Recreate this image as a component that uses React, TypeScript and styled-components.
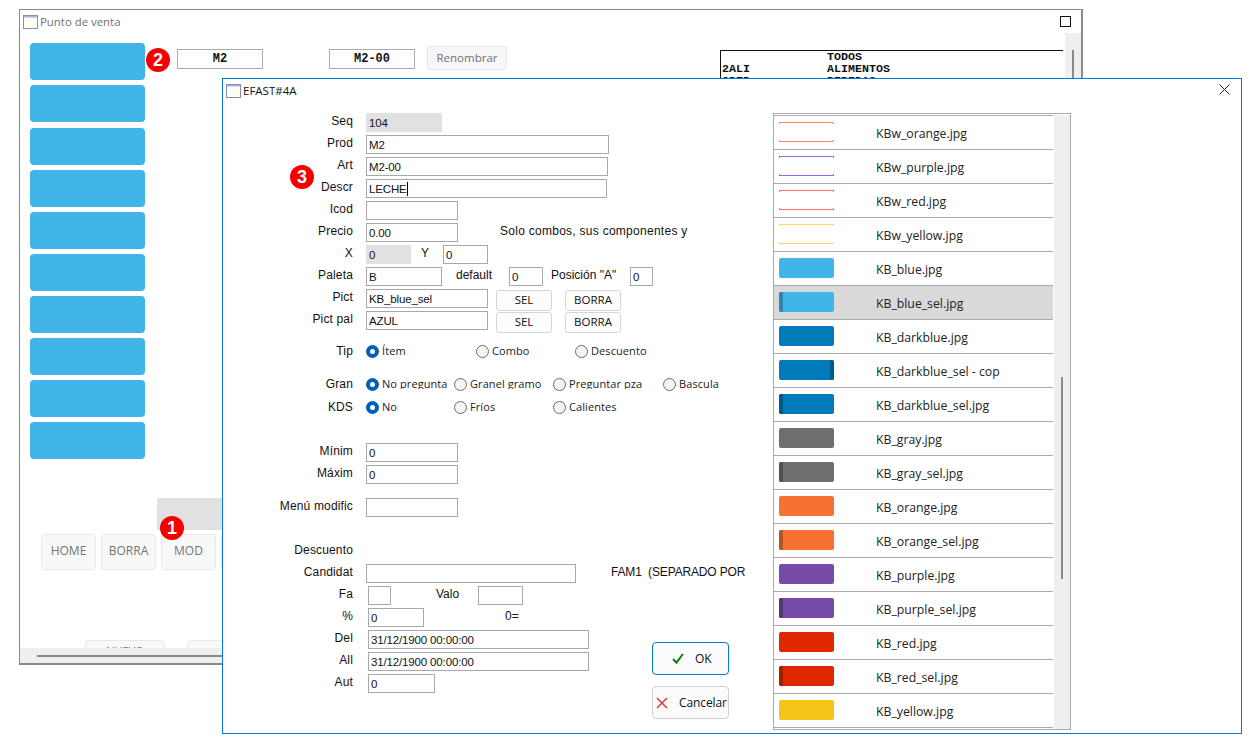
import styled, { createGlobalStyle } from 'styled-components';

const GlobalStyle = createGlobalStyle`
    html, body {
        margin: 0;
        padding: 0;
        background: #ffffff;
    }
    body {
        width: 1253px;
        height: 744px;
        overflow: hidden;
        font-family: "Liberation Sans", Arial, sans-serif;
        font-size: 12px;
        color: #111111;
    }
`;

const SIDE_BUTTONS = 10;

const FILES: { name: string; color: string; mark?: string; side?: 'left' | 'right'; outline?: boolean; active?: boolean }[] = [
    { name: 'KBw_orange.jpg', color: '#ff8a5c', outline: true },
    { name: 'KBw_purple.jpg', color: '#9a66ee', outline: true },
    { name: 'KBw_red.jpg', color: '#ff6d60', outline: true },
    { name: 'KBw_yellow.jpg', color: '#fbd768', outline: true },
    { name: 'KB_blue.jpg', color: '#41b5e8' },
    { name: 'KB_blue_sel.jpg', color: '#41b5e8', mark: '#2f86ac', side: 'left', active: true },
    { name: 'KB_darkblue.jpg', color: '#007ab8' },
    { name: 'KB_darkblue_sel - copia.jpg', color: '#007ab8', mark: '#005a88', side: 'right' },
    { name: 'KB_darkblue_sel.jpg', color: '#007ab8', mark: '#005a88', side: 'left' },
    { name: 'KB_gray.jpg', color: '#6e6e6e' },
    { name: 'KB_gray_sel.jpg', color: '#6e6e6e', mark: '#505050', side: 'left' },
    { name: 'KB_orange.jpg', color: '#f57232' },
    { name: 'KB_orange_sel.jpg', color: '#f57232', mark: '#b45424', side: 'left' },
    { name: 'KB_purple.jpg', color: '#744ca8' },
    { name: 'KB_purple_sel.jpg', color: '#744ca8', mark: '#56387c', side: 'left' },
    { name: 'KB_red.jpg', color: '#de2800' },
    { name: 'KB_red_sel.jpg', color: '#de2800', mark: '#a41e00', side: 'left' },
    { name: 'KB_yellow.jpg', color: '#f4c418' },
];

const WindowIcon = () => (
    <svg width="15" height="14" viewBox="0 0 15 14">
        <rect x="0.5" y="0.5" width="14" height="13" fill="#fdfdf6" stroke="#8490b8" />
        <rect x="1" y="1" width="13" height="1.5" fill="#a9b6dc" />
    </svg>
);

const App = () => {
    return (
        <>
            <GlobalStyle />
            <BackWindow>
                <TitleBar>
                    <WindowIcon />
                    <BackTitle>Punto de venta</BackTitle>
                    <MaxBox />
                </TitleBar>
                <BackBody>
                    <SideColumn>
                        {Array.from({ length: SIDE_BUTTONS }).map((_, i) => (
                            <SideButton key={i} />
                        ))}
                    </SideColumn>
                    <BackMain>
                        <TopRow>
                            <Badge>2</Badge>
                            <CodeBox>M2</CodeBox>
                            <CodeBox $left={66}>M2-00</CodeBox>
                            <RenameButton>Renombrar</RenameButton>
                            <FamilyList>
                                <FamilyRow><span></span><span>TODOS</span></FamilyRow>
                                <FamilyRow><span>2ALI</span><span>ALIMENTOS</span></FamilyRow>
                                <FamilyRow><span>3BEB</span><span>BEBIDAS</span></FamilyRow>
                            </FamilyList>
                        </TopRow>
                    </BackMain>
                    <VScroll><VThumb /></VScroll>
                </BackBody>
                <GrayBand />
                <ActionRow>
                    <ActionBadge>1</ActionBadge>
                    <ActionButton>HOME</ActionButton>
                    <ActionButton>BORRA</ActionButton>
                    <ActionButton>MOD</ActionButton>
                    <ActionButton />
                </ActionRow>
                <FooterRow>
                    <FooterButton>NUEVO</FooterButton>
                    <FooterButton />
                </FooterRow>
                <HScroll><HThumb /></HScroll>
            </BackWindow>

            <Dialog>
                <DialogTitle>
                    <WindowIcon />
                    <DialogName>EFAST#4A</DialogName>
                    <CloseIcon width="11" height="11" viewBox="0 0 11 11">
                        <path d="M0.5 0.5 L10.5 10.5 M10.5 0.5 L0.5 10.5" stroke="#222222" strokeWidth="1" fill="none" />
                    </CloseIcon>
                </DialogTitle>
                <DialogBody>
                    <FormColumn>
                        <Row>
                            <Label>Seq</Label>
                            <Field $w={76} $readonly>104</Field>
                        </Row>
                        <Row>
                            <Label>Prod</Label>
                            <Field $w={243}>M2</Field>
                        </Row>
                        <Row>
                            <Label>Art</Label>
                            <Field $w={242}>M2-00</Field>
                        </Row>
                        <Row>
                            <Label>Descr<InlineBadge>3</InlineBadge></Label>
                            <Field $w={241}>LECHE<Caret /></Field>
                        </Row>
                        <Row>
                            <Label>Icod</Label>
                            <Field $w={92} />
                        </Row>
                        <Row>
                            <Label>Precio</Label>
                            <Field $w={92}>0.00</Field>
                            <Note $left={42} $w={188} $spread={0.27} $clip>Solo combos, sus componentes y</Note>
                        </Row>
                        <Row>
                            <Label>X</Label>
                            <Field $w={45} $readonly>0</Field>
                            <Note $left={10} $w={22}>Y</Note>
                            <Field $w={45}>0</Field>
                        </Row>
                        <Row>
                            <Label>Paleta</Label>
                            <Field $w={76}>B</Field>
                            <Note $left={14} $w={53}>default</Note>
                            <Field $w={34}>0</Field>
                            <Note $left={8} $w={79}>Posición "A"</Note>
                            <Field $w={23}>0</Field>
                        </Row>
                        <Row>
                            <Label>Pict</Label>
                            <Field $w={122}>KB_blue_sel</Field>
                            <SmallButton $left={8}>SEL</SmallButton>
                            <SmallButton $left={13}>BORRA</SmallButton>
                        </Row>
                        <Row>
                            <Label>Pict pal</Label>
                            <Field $w={122}>AZUL</Field>
                            <SmallButton $left={8}>SEL</SmallButton>
                            <SmallButton $left={13}>BORRA</SmallButton>
                        </Row>

                        <RadioRow $top={8}>
                            <Label>Tip</Label>
                            <RadioCell $w={110}><Radio $on /><RadioText>Ítem</RadioText></RadioCell>
                            <RadioCell $w={99}><Radio /><RadioText>Combo</RadioText></RadioCell>
                            <RadioCell $w={110}><Radio /><RadioText>Descuento</RadioText></RadioCell>
                        </RadioRow>
                        <RadioRow $top={10}>
                            <Label>Gran</Label>
                            <RadioCell $w={88}><Radio $on /><RadioText $cut>No pregunta</RadioText></RadioCell>
                            <RadioCell $w={99}><Radio /><RadioText $cut>Granel gramo</RadioText></RadioCell>
                            <RadioCell $w={110}><Radio /><RadioText $cut>Preguntar pza</RadioText></RadioCell>
                            <RadioCell $w={70}><Radio /><RadioText>Bascula</RadioText></RadioCell>
                        </RadioRow>
                        <RadioRow $top={0}>
                            <Label>KDS</Label>
                            <RadioCell $w={88}><Radio $on /><RadioText>No</RadioText></RadioCell>
                            <RadioCell $w={99}><Radio /><RadioText>Fríos</RadioText></RadioCell>
                            <RadioCell $w={110}><Radio /><RadioText>Calientes</RadioText></RadioCell>
                        </RadioRow>

                        <Row $top={23}>
                            <Label>Mínim</Label>
                            <Field $w={92}>0</Field>
                        </Row>
                        <Row>
                            <Label>Máxim</Label>
                            <Field $w={92}>0</Field>
                        </Row>
                        <Row $top={11}>
                            <Label>Menú modific</Label>
                            <Field $w={92} />
                        </Row>

                        <Row $top={22}>
                            <Label>Descuento</Label>
                        </Row>
                        <Row>
                            <Label>Candidat</Label>
                            <Field $w={210} />
                            <Note $left={35} $w={140} $spread={-0.15}>FAM1 &nbsp;(SEPARADO POR</Note>
                        </Row>
                        <Row>
                            <Label>Fa</Label>
                            <Field $w={23} $left={2} />
                            <Note $left={45} $w={42}>Valo</Note>
                            <Field $w={45} />
                        </Row>
                        <Row>
                            <Label>%</Label>
                            <Field $w={56} $left={2}>0</Field>
                            <Note $left={81}>0=</Note>
                        </Row>
                        <Row>
                            <Label>Del</Label>
                            <Field $w={221} $left={2}>31/12/1900 00:00:00</Field>
                        </Row>
                        <Row>
                            <Label>All</Label>
                            <Field $w={221} $left={2}>31/12/1900 00:00:00</Field>
                        </Row>
                        <Row>
                            <Label>Aut</Label>
                            <Field $w={67} $left={2}>0</Field>
                        </Row>
                        <DialogActions>
                            <ConfirmButton $primary>
                                <svg width="12" height="11" viewBox="0 0 12 11">
                                    <path d="M1 6 L4.4 9.6 L11 1" stroke="#0b7a0b" strokeWidth="2" fill="none" />
                                </svg>
                                OK
                            </ConfirmButton>
                            <ConfirmButton>
                                <svg width="12" height="12" viewBox="0 0 12 12">
                                    <path d="M1 1 L11 11 M11 1 L1 11" stroke="#d23c3c" strokeWidth="1.5" fill="none" />
                                </svg>
                                Cancelar
                            </ConfirmButton>
                        </DialogActions>
                    </FormColumn>

                    <FileFrame>
                        <FileList>
                            {FILES.map((file) => (
                                <FileRow key={file.name} $active={file.active}>
                                    <Swatch $color={file.color} $outline={file.outline}>
                                        {file.mark && <SwatchMark $color={file.mark} $side={file.side} />}
                                    </Swatch>
                                    <FileName>{file.name}</FileName>
                                </FileRow>
                            ))}
                        </FileList>
                        <ListScroll><ListThumb /></ListScroll>
                    </FileFrame>
                </DialogBody>
            </Dialog>
        </>
    );
};

export default App;

const BackWindow = styled.div`
    position: absolute;
    left: 19px;
    top: 9px;
    width: 1064px;
    height: 656px;
    box-sizing: border-box;
    border: 1px solid #8a8a8a;
    border-right-width: 2px;
    border-bottom-width: 2px;
    background: #ffffff;
    display: flex;
    flex-direction: column;
`;

const TitleBar = styled.div`
    height: 23px;
    padding: 5px 10px 0 3px;
    box-sizing: border-box;
    display: flex;
    align-items: flex-start;
    gap: 2px;
`;

const BackTitle = styled.span`
    color: #707070;
    font-family: "Open Sans", sans-serif;
    font-size: 11.4px;
    line-height: 14px;
    flex: 1;
`;

const MaxBox = styled.span`
    width: 9px;
    height: 9px;
    border: 1px solid #111111;
    margin: 1px 0 0;
`;

const BackBody = styled.div`
    display: flex;
    height: 442px;
    padding-left: 10px;
`;

const SideColumn = styled.div`
    width: 115px;
    padding-top: 10px;
    display: flex;
    flex-direction: column;
    gap: 5px;
`;

const SideButton = styled.div`
    height: 37px;
    flex: none;
    border-radius: 4px;
    background: #41b5e8;

    &:nth-child(3) {
        margin-top: 1px;
    }
`;

const BackMain = styled.div`
    flex: 1;
    min-width: 0;
`;

const TopRow = styled.div`
    display: flex;
    align-items: flex-start;
    padding-top: 13px;
`;

const Badge = styled.span`
    width: 24px;
    height: 24px;
    flex: none;
    margin: 2px 0 0 1px;
    border-radius: 50%;
    background: #f40000;
    color: #ffffff;
    font-family: "Liberation Sans Narrow", "Liberation Sans", sans-serif;
    font-weight: 700;
    font-size: 18px;
    line-height: 24px;
    letter-spacing: 0;
    text-align: center;
`;

const CodeBox = styled.div<{ $left?: number }>`
    width: 86px;
    height: 20px;
    margin: 3px 0 0 ${(props) => props.$left ?? 7}px;
    box-sizing: border-box;
    border: 1px solid #aaaaaa;
    text-align: center;
    font-family: "Liberation Mono", monospace;
    font-weight: 700;
    font-size: 12px;
    line-height: 18px;
    color: #111111;
`;

const RenameButton = styled.div`
    width: 80px;
    height: 24px;
    margin-left: 12px;
    box-sizing: border-box;
    border: 1px solid #e6e6e6;
    border-radius: 3px;
    background: #f7f7f7;
    color: #707070;
    font-family: "Open Sans", sans-serif;
    font-size: 11.5px;
    line-height: 22px;
    text-align: center;
`;

const FamilyList = styled.div`
    width: 343px;
    height: 40px;
    margin: 4px 0 0 213px;
    box-sizing: border-box;
    border-top: 1px solid #111111;
    border-left: 1px solid #111111;
    padding: 0 0 0 1px;
    overflow: hidden;
`;

const FamilyRow = styled.div`
    height: 12px;
    display: grid;
    grid-template-columns: 105px 1fr;
    font-family: "Liberation Mono", monospace;
    font-weight: 700;
    font-size: 11.67px;
    line-height: 12px;
    color: #111111;
`;

const VScroll = styled.div`
    width: 16px;
    height: 100%;
    flex: none;
    background: #efefef;
    display: flex;
    justify-content: center;
    padding-top: 17px;
    box-sizing: border-box;
`;

const VThumb = styled.div`
    width: 2px;
    height: 200px;
    background: #8a8a8a;
`;

const GrayBand = styled.div`
    width: 66px;
    height: 32px;
    margin: 23px 0 0 137px;
    background: #e1e1e1;
`;

const ActionRow = styled.div`
    position: relative;
    display: flex;
    gap: 5px;
    padding: 4px 0 0 21px;
`;

const ActionBadge = styled(Badge)`
    position: absolute;
    left: 140px;
    top: -14px;
    margin: 0;
`;

const ActionButton = styled.div`
    width: 55px;
    height: 36px;
    box-sizing: border-box;
    border: 1px solid #e8e8e8;
    border-radius: 4px;
    background: #f8f8f8;
    color: #757575;
    font-family: "Open Sans", sans-serif;
    font-size: 12px;
    line-height: 32px;
    text-align: center;
`;

const FooterRow = styled.div`
    display: flex;
    gap: 22px;
    height: 8px;
    margin-top: 70px;
    padding-left: 65px;
    overflow: hidden;
`;

const FooterButton = styled(ActionButton)`
    width: 80px;
    height: 24px;
    line-height: 20px;
    font-size: 11px;
`;

const HScroll = styled.div`
    flex: 1;
    background: #efefef;
    padding: 7px 0 0 17px;
    box-sizing: border-box;
`;

const HThumb = styled.div`
    width: 800px;
    height: 2px;
    background: #8a8a8a;
`;

const Dialog = styled.div`
    position: absolute;
    left: 222px;
    top: 78px;
    width: 1020px;
    height: 656px;
    box-sizing: border-box;
    border: 1px solid #0078d7;
    background: #ffffff;
    display: flex;
    flex-direction: column;
`;

const DialogTitle = styled.div`
    height: 34px;
    box-sizing: border-box;
    padding: 5px 11px 0 3px;
    display: flex;
    align-items: flex-start;
    gap: 2px;
`;

const DialogName = styled.span`
    flex: 1;
    color: #111111;
    font-family: "Open Sans", sans-serif;
    font-size: 11.5px;
    line-height: 14px;
`;

const CloseIcon = styled.svg`
    margin-top: 0;
`;

const DialogBody = styled.div`
    flex: 1;
    display: flex;
    align-items: flex-start;
`;

const FormColumn = styled.div`
    position: relative;
    width: 550px;
    flex: none;
    display: flex;
    flex-direction: column;
    gap: 3px;
`;

const Row = styled.div<{ $top?: number }>`
    display: flex;
    height: 19px;
    align-items: flex-start;
    margin-top: ${(props) => props.$top ?? 0}px;
`;

const Label = styled.div`
    position: relative;
    width: 130px;
    margin-right: 13px;
    padding-top: 1px;
    flex: none;
    text-align: right;
    font-size: 12px;
    line-height: 14px;
    letter-spacing: 0.15px;
    color: #111111;
    white-space: nowrap;
`;

const InlineBadge = styled(Badge)`
    position: absolute;
    left: 67px;
    top: -14px;
    margin: 0;
`;

const Field = styled.div<{ $w: number; $left?: number; $readonly?: boolean }>`
    width: ${(props) => props.$w}px;
    height: 19px;
    flex: none;
    margin-left: ${(props) => props.$left ?? 0}px;
    box-sizing: border-box;
    border: 1px solid ${(props) => (props.$readonly ? '#e1e1e1' : '#a8a8a8')};
    background: ${(props) => (props.$readonly ? '#e1e1e1' : '#ffffff')};
    padding: 2px 2px 0;
    font-size: 11.5px;
    line-height: 15px;
    letter-spacing: -0.15px;
    color: #111111;
    white-space: nowrap;
    overflow: hidden;
`;

const Caret = styled.span`
    display: inline-block;
    width: 1px;
    height: 14px;
    background: #000000;
    vertical-align: -3px;
`;

const Note = styled.div<{ $left?: number; $w?: number; $spread?: number; $clip?: boolean }>`
    margin-left: ${(props) => props.$left ?? 0}px;
    padding-top: 1px;
    ${(props) => (props.$w ? `width: ${props.$w}px;` : '')}
    ${(props) => (props.$clip ? 'overflow: hidden;' : '')}
    flex: none;
    font-size: 12px;
    line-height: 14px;
    letter-spacing: ${(props) => props.$spread ?? 0}px;
    white-space: nowrap;
    color: #111111;
`;

const SmallButton = styled.div<{ $left: number }>`
    width: 56px;
    height: 21px;
    flex: none;
    margin: 1px 0 0 ${(props) => props.$left}px;
    box-sizing: border-box;
    border: 1px solid #d6d6d6;
    border-radius: 3px;
    background: #fdfdfd;
    text-align: center;
    font-family: "Open Sans", sans-serif;
    font-size: 11.5px;
    line-height: 18px;
    color: #111111;
`;

const RadioRow = styled.div<{ $top: number }>`
    display: flex;
    height: 20px;
    align-items: center;
    margin-top: ${(props) => props.$top}px;

    ${Label} {
        padding-top: 0;
        line-height: 20px;
    }
`;

const RadioCell = styled.div<{ $w: number }>`
    width: ${(props) => props.$w}px;
    flex: none;
    display: flex;
    align-items: center;
    gap: 3px;
`;

const RadioText = styled.span<{ $cut?: boolean }>`
    height: ${(props) => (props.$cut ? 13 : 15)}px;
    margin-bottom: ${(props) => (props.$cut ? 4 : 2)}px;
    overflow: hidden;
    font-family: "Open Sans", sans-serif;
    font-size: 11px;
    line-height: 15px;
    letter-spacing: 0.08px;
    color: #222222;
    white-space: nowrap;
`;

const Radio = styled.span<{ $on?: boolean }>`
    width: 13px;
    height: 13px;
    flex: none;
    box-sizing: border-box;
    border-radius: 50%;
    border: ${(props) => (props.$on ? '4px solid #0060b8' : '1px solid #6e6e6e')};
    background: ${(props) => (props.$on ? '#ffffff' : '#f4f4f4')};
`;

const DialogActions = styled.div`
    position: absolute;
    left: 429px;
    top: 529px;
    display: flex;
    flex-direction: column;
    gap: 11px;
`;

const ConfirmButton = styled.div<{ $primary?: boolean }>`
    width: 77px;
    height: 33px;
    box-sizing: border-box;
    display: flex;
    align-items: center;
    gap: 11px;
    padding-left: ${(props) => (props.$primary ? 19 : 3)}px;
    border: 1px solid ${(props) => (props.$primary ? '#0078d7' : '#d0d0d0')};
    border-radius: 4px;
    background: #fbfbfb;
    font-family: "Open Sans", sans-serif;
    font-size: 12px;
    letter-spacing: -0.1px;
    color: #111111;
`;

const FileFrame = styled.div`
    width: 298px;
    height: 617px;
    margin-left: 0;
    box-sizing: border-box;
    border: 1px solid #aaaaaa;
    padding-top: 1px;
    display: flex;
    overflow: hidden;
`;

const FileList = styled.div`
    width: 279px;
    margin-right: 1px;
    flex: none;
    border-bottom: 1px solid #aaaaaa;
    align-self: flex-start;
`;

const FileRow = styled.div<{ $active?: boolean }>`
    height: 34px;
    box-sizing: border-box;
    border-top: 1px solid #aaaaaa;
    padding: 0 0 1px 5px;
    display: flex;
    align-items: center;
    background: ${(props) => (props.$active ? '#d9d9d9' : '#ffffff')};
`;

const Swatch = styled.div<{ $color: string; $outline?: boolean }>`
    position: relative;
    width: 55px;
    height: 20px;
    flex: none;
    box-sizing: border-box;
    border-radius: ${(props) => (props.$outline ? 0 : 2)}px;
    overflow: hidden;
    background: ${(props) => (props.$outline ? '#ffffff' : props.$color)};

    ${(props) =>
        props.$outline &&
        `
        &::before,
        &::after {
            content: '';
            position: absolute;
            left: 0;
            right: 0;
            height: 2px;
            box-sizing: border-box;
            border: 1px solid ${props.$color};
        }
        &::before {
            top: 0;
            border-bottom: none;
        }
        &::after {
            bottom: 0;
            border-top: none;
        }
    `}
`;

const SwatchMark = styled.div<{ $color: string; $side?: 'left' | 'right' }>`
    position: absolute;
    top: 0;
    bottom: 0;
    ${(props) => props.$side}: 0;
    width: 4px;
    background: ${(props) => props.$color};
`;

const FileName = styled.div`
    width: 124px;
    margin: 3px 0 0 42px;
    overflow: hidden;
    white-space: nowrap;
    font-family: "Open Sans", sans-serif;
    font-size: 12.25px;
    line-height: 16px;
    color: #222222;
`;

const ListScroll = styled.div`
    flex: 1;
    background: #efefef;
    display: flex;
    justify-content: center;
    padding-top: 262px;
`;

const ListThumb = styled.div`
    width: 2px;
    height: 202px;
    background: #8a8a8a;
`;
